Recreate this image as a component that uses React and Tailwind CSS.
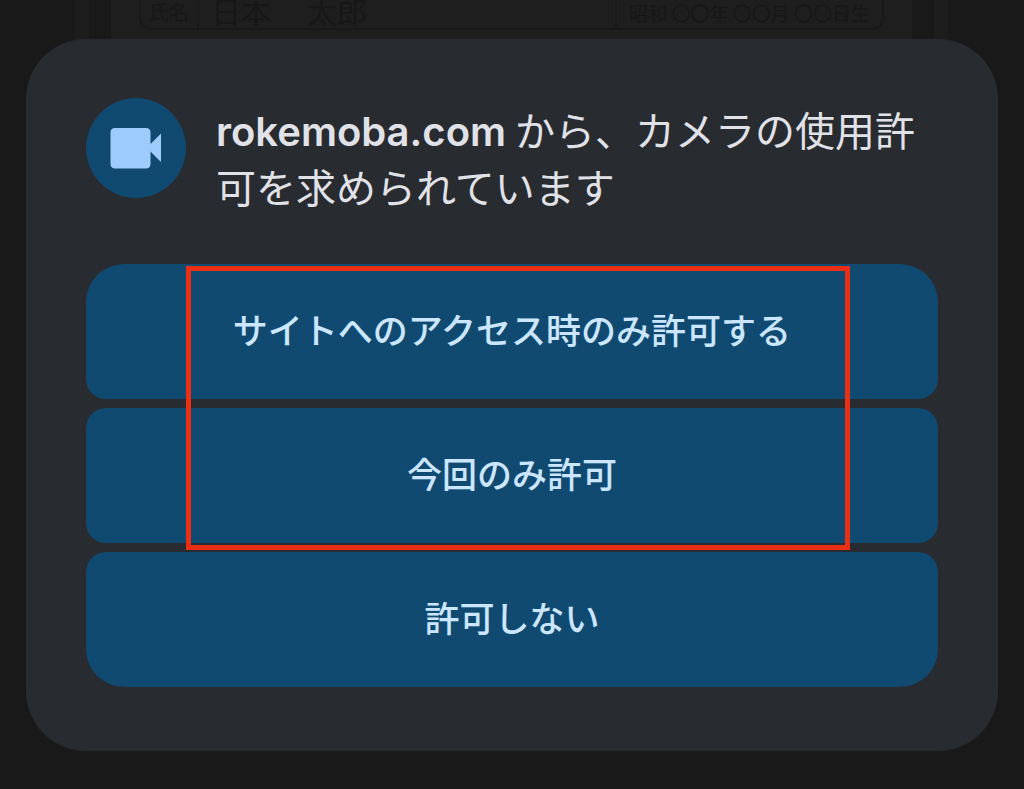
import React from "react";

function CameraIcon() {
  return (
    <svg viewBox="0 0 100 100" className="h-full w-full" aria-hidden="true">
      <path
        fill="#9dcbfb"
        d="M29 30H60Q64.500 30 64.500 34.500V46L75 35.500V64L64.500 53.500V65.500Q64.500 70.500 60 70.500H29Q24.500 70.500 24.500 65.500V34.500Q24.500 30 29 30Z"
      />
    </svg>
  );
}

function PageBehind() {
  return (
    <div
      aria-hidden="true"
      className="absolute inset-x-0 top-0 flex h-28 justify-center overflow-hidden pr-px text-[#171717]"
    >
      <div className="mx-[75px] flex flex-1 bg-[#1d1d1d] px-[14px]">
        <div className="flex-1 border-x-[22px] border-[#191919] bg-[#1e1e1e] px-7">
          <div className="flex h-[30px] items-stretch rounded-b-xl border-2 border-t-0 border-[#191919]">
            <div className="flex w-[58px] items-center justify-center border-r-2 border-[#191919] pb-1 text-[20px] leading-none">
              氏名
            </div>
            <div className="flex flex-1 items-center gap-9 pb-2 pl-3 text-[30px] leading-none">
              <span>日本</span>
              <span>太郎</span>
            </div>
            <div className="flex items-center border-l-2 border-[#191919] pr-3 pb-1 pl-3 text-[19px] leading-none whitespace-nowrap">
              昭和 〇〇年 〇〇月 〇〇日生
            </div>
          </div>
        </div>
      </div>
    </div>
  );
}

const buttonClass =
  "flex h-[135px] w-full items-center justify-center bg-[#114a70] pb-[6px] text-[35px] leading-none font-medium text-[#cbe6ff]";

export default function App() {
  return (
    <main
      lang="ja"
      className="relative min-h-screen bg-[#191919] px-[26px] pt-[39px] pb-[38px] font-['Noto_Sans_CJK_JP',sans-serif]"
    >
      <PageBehind />
      <section
        role="dialog"
        aria-labelledby="prompt"
        className="relative rounded-[60px] bg-[#282b30] px-[60px] pt-[59px] pb-16"
      >
        <div className="flex items-start gap-[30px]">
          <div className="size-[100px] shrink-0 rounded-full bg-[#114a70]">
            <CameraIcon />
          </div>
          <h1 id="prompt" className="pt-[3px] text-[40px] leading-[57px] font-normal text-[#e1e2e8]">
            <span className="font-['Inter'] leading-none font-semibold">rokemoba.com</span>{" "}
            から、カメラの使用許可を求められています
          </h1>
        </div>
        <div className="relative mt-[49px] flex flex-col gap-[9px]">
          <button type="button" className={`${buttonClass} rounded-t-[38px] rounded-b-[20px]`}>
            サイトへのアクセス時のみ許可する
          </button>
          <button type="button" className={`${buttonClass} rounded-[20px]`}>
            今回のみ許可
          </button>
          <button type="button" className={`${buttonClass} rounded-t-[20px] rounded-b-[38px]`}>
            許可しない
          </button>
          <div className="pointer-events-none absolute top-[2px] right-[88px] left-[100px] h-[284px] border-[5px] border-[#e93016]" />
        </div>
      </section>
    </main>
  );
}
